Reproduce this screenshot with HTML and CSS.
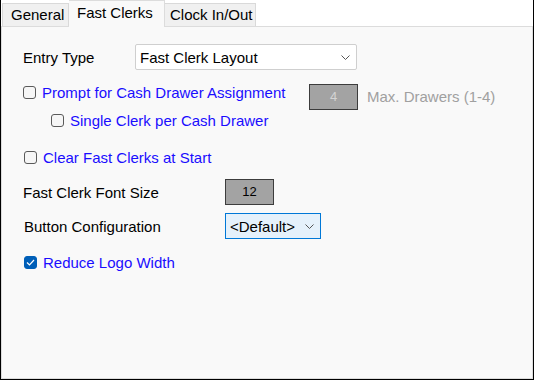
FILE: index.html
```html
<!DOCTYPE html>
<html lang="en">
    <head>
        <meta charset="UTF-8">
        <meta name="viewport" content="width=device-width, initial-scale=1.0">
        <link rel="stylesheet" href="styles.css">
        <title>Fast Clerks</title>
    </head>
    <body>
        <div class="window">
            <div class="tabs">
                <div class="tab tab-first">General</div>
                <div class="tab active">Fast Clerks</div>
                <div class="tab tab-last">Clock In/Out</div>
            </div>
            <div class="panel">
                <div class="row row-entry">
                    <span class="label label-entry">Entry Type</span>
                    <div class="dropdown dropdown-entry">
                        <span>Fast Clerk Layout</span>
                        <svg class="chevron" width="9" height="5" viewBox="0 0 9 5"><path d="M0.5 0.5 L4.5 4.5 L8.5 0.5" fill="none" stroke="#555" stroke-width="1"/></svg>
                    </div>
                </div>
                <div class="row row-prompt">
                    <label class="check check-prompt"><span class="box"></span><span class="link">Prompt for Cash Drawer Assignment</span></label>
                    <div class="field field-disabled">4</div>
                    <span class="label label-disabled">Max. Drawers (1-4)</span>
                </div>
                <div class="row row-single">
                    <label class="check"><span class="box"></span><span class="link">Single Clerk per Cash Drawer</span></label>
                </div>
                <div class="row row-clear">
                    <label class="check"><span class="box"></span><span class="link">Clear Fast Clerks at Start</span></label>
                </div>
                <div class="row row-font">
                    <span class="label label-wide">Fast Clerk Font Size</span>
                    <div class="field">12</div>
                </div>
                <div class="row row-button">
                    <span class="label label-wide label-shift">Button Configuration</span>
                    <div class="dropdown dropdown-focus">
                        <span>&lt;Default&gt;</span>
                        <svg class="chevron" width="9" height="5" viewBox="0 0 9 5"><path d="M0.5 0.5 L4.5 4.5 L8.5 0.5" fill="none" stroke="#555" stroke-width="1"/></svg>
                    </div>
                </div>
                <div class="row row-logo">
                    <label class="check"><span class="box checked"><svg width="9" height="7" viewBox="0 0 9 7"><path d="M1 3.5 L3.5 6 L8 1" fill="none" stroke="#fff" stroke-width="1.2"/></svg></span><span class="link">Reduce Logo Width</span></label>
                </div>
            </div>
        </div>
    </body>
</html>
```

FILE: styles.css
```css
* {
    box-sizing: border-box;
}

body {
    margin: 0;
    background-color: #fff;
    font-family: "Liberation Sans", Arial, sans-serif;
    font-size: 15px;
    color: #000;
}

.window {
    width: 534px;
    height: 380px;
    display: flex;
    flex-direction: column;
    border: 1px solid #000;
    border-top: none;
}

.tabs {
    display: flex;
    align-items: flex-end;
    height: 26px;
    padding-left: 1px;
    position: relative;
    z-index: 1;
}

.tab {
    height: 23px;
    line-height: 22px;
    padding: 0 6px;
    white-space: nowrap;
    background-color: #f0f0f0;
    border: 1px solid #d9d9d9;
    border-bottom: none;
}

.tab-first {
    width: 67px;
    padding-left: 8px;
}

.tab.active {
    width: 96px;
    height: 27px;
    margin-bottom: -1px;
    line-height: 24px;
    padding-left: 8px;
    background-color: #f9f9f9;
    border-color: #dcdcdc;
    border-left: none;
}

.tab-last {
    width: 91px;
    border-left: none;
    padding-left: 5px;
}

.panel {
    flex: 1;
    background-color: #f9f9f9;
    border: 1px solid #dcdcdc;
    padding: 17px 0 0 21px;
}

.row {
    display: flex;
    align-items: center;
}

.label {
    line-height: 17px;
}

.label-entry {
    width: 112px;
}

.label-wide {
    width: 202px;
}

.label-shift {
    padding-left: 1px;
}

.label-disabled {
    color: #a0a0a0;
    margin-left: 9px;
}

.dropdown {
    display: flex;
    align-items: center;
    justify-content: space-between;
    height: 26px;
    padding: 0 6px 0 4px;
    background-color: #fff;
    border: 1px solid #cfcfcf;
    border-radius: 2px;
}

.dropdown-entry {
    width: 222px;
}

.dropdown-focus {
    width: 96px;
    height: 26px;
    background-color: #e5f1fb;
    border-color: #0078d7;
    border-radius: 0;
}

.chevron {
    display: block;
}

.field {
    width: 49px;
    height: 26px;
    line-height: 24px;
    text-align: center;
    font-size: 13px;
    background-color: #a3a3a3;
    border: 1px solid #3c3c3c;
}

.field-disabled {
    color: #d4d4d4;
}

.check {
    display: flex;
    align-items: center;
    line-height: 17px;
}

.box {
    display: flex;
    align-items: center;
    justify-content: center;
    width: 13px;
    height: 13px;
    margin-right: 6px;
    background-color: #f6f6f6;
    border: 1px solid #5a5a5a;
    border-radius: 3px;
}

.box.checked {
    background-color: #005fb8;
    border-color: #005fb8;
}

.link {
    color: #1a0dff;
}

.row-prompt {
    margin-top: 14px;
    align-items: flex-start;
}

.row-prompt .check {
    width: 286px;
}

.row-prompt .label-disabled {
    line-height: 26px;
}

.row-single {
    margin-top: 2px;
    padding-left: 28px;
}

.row-clear {
    margin-top: 20px;
    padding-left: 1px;
}

.row-font {
    margin-top: 13px;
}

.row-button {
    margin-top: 8px;
}

.row-logo {
    margin-top: 15px;
    padding-left: 1px;
}
```
